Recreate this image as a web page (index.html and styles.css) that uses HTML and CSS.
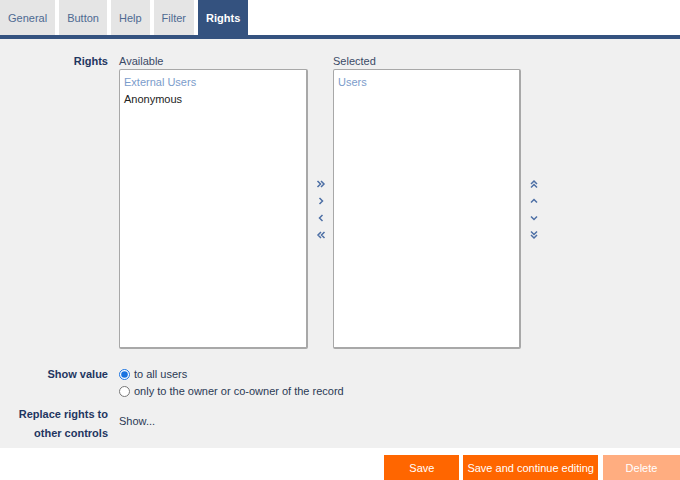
FILE: index.html
```html
<!DOCTYPE html>
<html lang="en">
<head>
    <meta charset="UTF-8">
    <meta name="viewport" content="width=device-width, initial-scale=1.0">
    <title>Control rights</title>
    <link rel="stylesheet" href="styles.css">
</head>
<body>
    <div class="tabs">
        <div class="tab">General</div>
        <div class="tab">Button</div>
        <div class="tab">Help</div>
        <div class="tab">Filter</div>
        <div class="tab tab-active">Rights</div>
    </div>

    <div class="content">
        <div class="row">
            <div class="label">Rights</div>
            <div class="picklist">
                <div class="pick-col">
                    <div class="pick-title">Available</div>
                    <div class="listbox">
                        <div class="item item-group">External Users</div>
                        <div class="item">Anonymous</div>
                    </div>
                </div>
                <div class="arrows">
                    <svg viewBox="0 0 10 10"><path d="M1.5 2l3 3-3 3M5 2l3 3-3 3"/></svg>
                    <svg viewBox="0 0 10 10"><path d="M3.5 2l3 3-3 3"/></svg>
                    <svg viewBox="0 0 10 10"><path d="M6.5 2l-3 3 3 3"/></svg>
                    <svg viewBox="0 0 10 10"><path d="M5 2L2 5l3 3M8.5 2l-3 3 3 3"/></svg>
                </div>
                <div class="pick-col pick-col-selected">
                    <div class="pick-title">Selected</div>
                    <div class="listbox">
                        <div class="item item-group">Users</div>
                    </div>
                </div>
                <div class="arrows">
                    <svg viewBox="0 0 10 10"><path d="M2 5l3-3 3 3M2 8.5l3-3 3 3"/></svg>
                    <svg viewBox="0 0 10 10"><path d="M2 6.5l3-3 3 3"/></svg>
                    <svg viewBox="0 0 10 10"><path d="M2 3.5l3 3 3-3"/></svg>
                    <svg viewBox="0 0 10 10"><path d="M2 1.5l3 3 3-3M2 5l3 3 3-3"/></svg>
                </div>
            </div>
        </div>

        <div class="row row-show">
            <div class="label">Show value</div>
            <div class="options">
                <label class="option"><input type="radio" name="show" checked> to all users</label>
                <label class="option"><input type="radio" name="show"> only to the owner or co-owner of the record</label>
            </div>
        </div>

        <div class="row row-replace">
            <div class="label">Replace rights to<br>other controls</div>
            <div class="value-link">Show...</div>
        </div>
    </div>

    <div class="footer">
        <button class="btn">Save</button>
        <button class="btn">Save and continue editing</button>
        <button class="btn btn-disabled">Delete</button>
    </div>
</body>
</html>
```

FILE: styles.css
```css
body {
    margin: 0;
    font-family: "Liberation Sans", Arial, sans-serif;
    font-size: 11px;
    color: #2b3a55;
    background: #ffffff;
    width: 680px;
}

.tabs {
    display: flex;
    gap: 4px;
    height: 35px;
    border-bottom: 4px solid #34527f;
}

.tab {
    display: flex;
    align-items: center;
    padding: 0 8px;
    background-color: #e5e5e5;
    color: #4e6a92;
}

.tab-active {
    background-color: #34527f;
    color: #ffffff;
    font-weight: bold;
}

.content {
    background-color: #f0f0f0;
    padding: 14px 0 5px;
}

.row {
    display: grid;
    grid-template-columns: 108px 1fr;
    column-gap: 11px;
}

.label {
    text-align: right;
    font-weight: bold;
    color: #1f3660;
    line-height: 16px;
}

.picklist {
    display: flex;
}

.pick-col {
    display: flex;
    flex-direction: column;
    width: 189px;
}

.pick-col-selected {
    width: 188px;
}

.pick-title {
    line-height: 16px;
    color: #3a4a66;
}

.listbox {
    height: 273px;
    background: #ffffff;
    border: 1px solid #a8a8a8;
    border-right-width: 2px;
    border-bottom-width: 2px;
    border-radius: 2px;
    padding-top: 4px;
    box-sizing: content-box;
}

.item {
    line-height: 17px;
    padding-left: 4px;
    color: #222222;
}

.item-group {
    color: #7b9ccb;
}

.arrows {
    width: 26px;
    display: flex;
    flex-direction: column;
    align-items: center;
    justify-content: center;
    gap: 7px;
    padding-top: 16px;
}

.arrows:nth-child(2) {
    width: 25px;
}

.arrows svg {
    width: 10px;
    height: 10px;
    fill: none;
    stroke: #4d6fa5;
    stroke-width: 1.5;
}

.row-show {
    margin-top: 17px;
}

.row-show .label {
    line-height: 17px;
}

.options {
    display: flex;
    flex-direction: column;
}

.option {
    display: flex;
    align-items: center;
    line-height: 17px;
    color: #2b3a55;
}

.option input {
    margin: 0 4px 0 0;
    width: 11px;
    height: 11px;
    accent-color: #1a73e0;
}

.row-replace {
    margin-top: 5px;
}

.row-replace .label {
    line-height: 19px;
}

.value-link {
    padding-top: 8px;
    line-height: 17px;
    color: #2b3a55;
}

.footer {
    display: flex;
    justify-content: flex-end;
    gap: 4px;
    padding-top: 7px;
}

.btn {
    height: 26px;
    min-width: 75px;
    padding: 0 4px;
    border: none;
    background-color: #ff6600;
    color: #ffffff;
    font-family: "Liberation Sans", Arial, sans-serif;
    font-size: 11px;
}

.btn-disabled {
    background-color: #ffad80;
    min-width: 77px;
    margin-left: 1px;
}
```
